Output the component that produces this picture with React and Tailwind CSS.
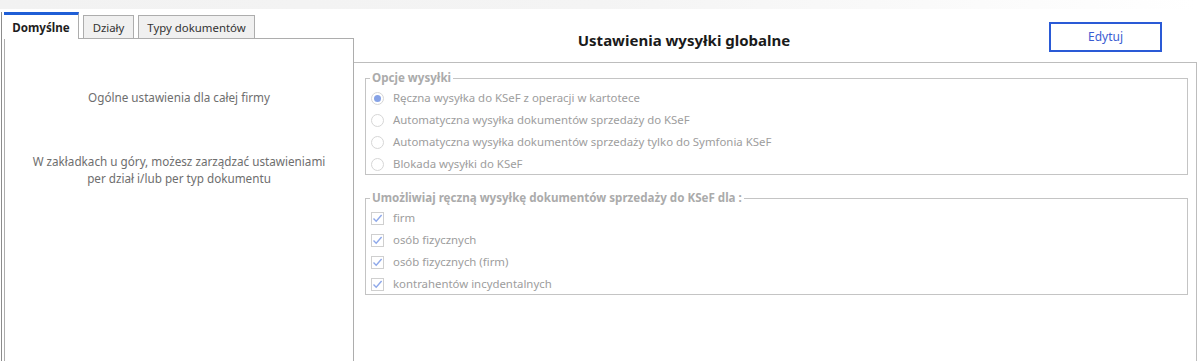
import React from 'react';

const FONT = { fontFamily: '"Noto Sans", "Open Sans", sans-serif' };

const SEND_OPTIONS = [
  'Ręczna wysyłka do KSeF z operacji w kartotece',
  'Automatyczna wysyłka dokumentów sprzedaży do KSeF',
  'Automatyczna wysyłka dokumentów sprzedaży tylko do Symfonia KSeF',
  'Blokada wysyłki do KSeF',
];

const TARGETS = ['firm', 'osób fizycznych', 'osób fizycznych (firm)', 'kontrahentów incydentalnych'];

function Radio({ checked }) {
  return (
    <span className="w-[13px] h-[13px] rounded-full border border-[#d6d6d6] bg-white flex items-center justify-center shrink-0">
      {checked && <span className="w-[7px] h-[7px] rounded-full bg-[#86a2e6]" />}
    </span>
  );
}

function Check() {
  return (
    <span className="w-[13px] h-[13px] border border-[#cfcfcf] bg-white flex items-center justify-center shrink-0">
      <svg width="11" height="11" viewBox="0 0 11 11">
        <path d="M1.5 5.5 L4.2 8.2 L9.6 2" fill="none" stroke="#8ea8ea" strokeWidth="1.4" />
      </svg>
    </span>
  );
}

function Group({ title, children }) {
  return (
    <div className="relative border border-[#c4c4c4] pt-[9px] pl-[5px]">
      <span className="absolute -top-[8px] left-[4px] bg-white px-[2px] text-[11.6px] leading-[14px] font-bold text-[#ababab]">
        {title}
      </span>
      <div className="flex flex-col gap-[2px]">{children}</div>
    </div>
  );
}

function Row({ control, label }) {
  return (
    <div className="h-[20px] flex items-center gap-[9px]">
      {control}
      <span className="text-[11.4px] text-[#9d9d9d] whitespace-nowrap">{label}</span>
    </div>
  );
}

export default function App() {
  return (
    <div className="w-[1197px] h-[361px] overflow-hidden bg-white flex flex-col" style={FONT}>
      <div className="h-[9px] shrink-0 bg-gradient-to-r from-[#f2f2f2] via-[#f4f4f4] to-white" />
      <div className="flex flex-1 min-h-0">
        {/* left: tabs */}
        <div className="w-[354px] shrink-0 flex flex-col pt-[3px] pl-[1px]">
          <div className="flex-1 border-l border-[#8c8c8c] pl-[2px] flex flex-col">
            <div className="flex items-end gap-[4px] h-[26px]">
              <div className="relative z-10 -mb-px h-[27px] w-[75px] bg-white border-t-[3px] border-t-[#1f5ed6] border-r border-r-[#adadad] flex items-center justify-center pt-[1px] text-[11.6px] font-bold text-[#1e1e1e]">
                Domyślne
              </div>
              <div className="h-[23px] w-[51px] bg-[#f0f0f0] border border-b-0 border-[#adadad] flex items-center justify-center pt-[1px] text-[11.4px] text-[#333]">
                Działy
              </div>
              <div className="h-[23px] w-[117px] bg-[#f0f0f0] border border-b-0 border-[#adadad] flex items-center justify-center pt-[1px] text-[11.4px] text-[#333]">
                Typy dokumentów
              </div>
            </div>
            <div className="flex-1 border border-b-0 border-[#adadad] pt-[50px] text-center text-[11.7px] leading-[17px] text-[#6e6e6e]">
              <p>Ogólne ustawienia dla całej firmy</p>
              <p className="mt-[47px]">
                W zakładkach u góry, możesz zarządzać ustawieniami
                <br />
                per dział i/lub per typ dokumentu
              </p>
            </div>
          </div>
        </div>

        {/* right: settings */}
        <div className="flex-1 flex flex-col">
          <div className="h-[53px] shrink-0 flex">
            <div className="flex-1 flex items-center justify-center pt-[9px]">
              <h1 className="text-[15px] font-bold text-[#1a1a1a]">Ustawienia wysyłki globalne</h1>
            </div>
            <div className="w-[183px] flex justify-center pt-[13px]">
              <button className="h-[30px] w-[113px] border-2 border-[#2a5ad6] bg-white text-[12px] text-[#3b5cd2]">
                Edytuj
              </button>
            </div>
          </div>
          <div className="flex-1 border-t border-r border-[#bdbdbd] pt-[15px] pl-[11px] pr-[8px]">
            <Group title="Opcje wysyłki">
              {SEND_OPTIONS.map((o, i) => (
                <Row key={o} control={<Radio checked={i === 0} />} label={o} />
              ))}
            </Group>
            <div className="mt-[23px]">
              <Group title="Umożliwiaj ręczną wysyłkę dokumentów sprzedaży do KSeF dla :">
                {TARGETS.map(t => (
                  <Row key={t} control={<Check />} label={t} />
                ))}
              </Group>
            </div>
          </div>
        </div>
      </div>
    </div>
  );
}
